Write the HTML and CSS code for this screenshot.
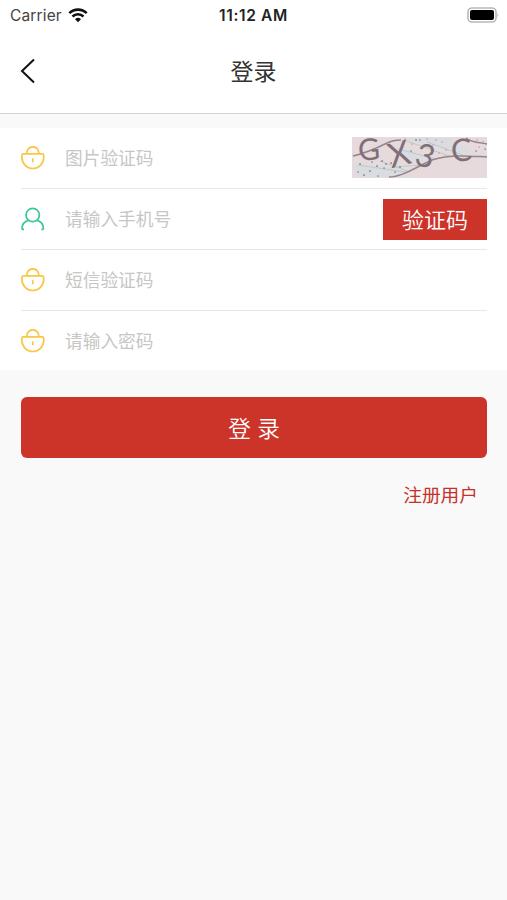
FILE: index.html
```
<!DOCTYPE html>
<html lang="zh-CN">

<head>
  <meta charset="UTF-8" />
  <meta name="viewport" content="width=device-width, initial-scale=1.0" />
  <title>登录</title>
  <link rel="stylesheet" href="styles.css">
</head>

<body>
  <div class="status">
    <div class="status-left">
      <span class="carrier">Carrier</span>
      <svg class="wifi" viewBox="0 0 20 15">
        <path d="M1.3 5.1a12.6 12.6 0 0 1 17.4 0" />
        <path d="M4.5 8.5a8 8 0 0 1 11 0" />
        <path class="wifi-dot" d="M7 11.2a4.3 4.3 0 0 1 6 0l-3 3z" />
      </svg>
    </div>
    <span class="time">11:12 AM</span>
    <div class="status-right">
      <svg class="battery" viewBox="0 0 33 16">
        <rect x="1" y="1" width="28" height="14" rx="4" fill="#fff" stroke="#b8b8b8" stroke-width="1.6" />
        <rect x="3" y="3" width="24" height="10" rx="2" />
        <path d="M30.5 5.8q1.8 2.2 0 4.4z" fill="#aaa" />
      </svg>
    </div>
  </div>
  <header class="header">
    <svg class="back" viewBox="0 0 16 26">
      <path d="M14 1.5L2 13l12 11.5" />
    </svg>
    <h1>登录</h1>
  </header>

  <form class="form">
    <div class="row">
      <svg class="icon lock" viewBox="0 0 24 24">
        <path d="M2.5 7.8h18.6q1.6 0 1.6 1.6v2.2a10.9 10.9 0 0 1-21.8 0V9.4q0-1.6 1.6-1.6zM5.8 7.6v-.8a6 6 0 0 1 12 0v.8M11.8 12.2v4" />
      </svg>
      <input type="text" placeholder="图片验证码">
      <svg class="captcha" viewBox="0 0 135 41">
        <rect width="135" height="41" fill="#e6dadd" />
        <path d="M0 27l34 3 28 10H6zM45 10l26 8 10 8-24-2zM50 1h48l26 16-30-4z" fill="#dadcdf" />
        <path d="M6 28l47 7M28 24l30 11M46 12l38 10M52 3l48 17M75 5l36 13M40 30l31-2" stroke="#b9cccd" fill="none" />
        <path d="M1 19c13-3 26-9 34-13 6-3 9-3 14-3M37 40c13 0 27-10 43-17 18-6 36-4 55-3M114 1c6 5 12 4 21 6" stroke="#93868d" stroke-width="1.5" fill="none" />
        <path d="M8 27h.1M18 34h.1M30 24h.1M39 26h.1M25 29h.1M12 38h.1M48 30h.1M34 27h.1M64 3h.1" class="dots blue" />
        <path d="M53 2h.1M60 7h.1M75 2h.1M81 8h.1M90 5h.1M87 16h.1M94 13h.1M127 10h.1M131 5h.1M125 3h.1M84 3h.1M93 19h.1" class="dots pink" />
        <path d="M6 35h.1M26 39h.1M43 35h.1M32 31h.1M59 14h.1M68 3h.1M124 14h.1M133 12h.1M20 25h.1" class="dots green" />
        <g class="captcha-text">
          <text x="6" y="23" font-size="30" transform="rotate(-4 17 13)">G</text>
          <text x="36" y="29" font-size="34" transform="rotate(-14 47 17)">X</text>
          <text x="64" y="30" font-size="32" transform="rotate(16 73 19)">3</text>
          <text x="99" y="24" font-size="31" transform="rotate(-4 110 13)">C</text>
        </g>
      </svg>
    </div>
    <div class="row">
      <svg class="icon user" viewBox="0 0 24 24">
        <circle cx="11.7" cy="8" r="6.7" />
        <path d="M1 22.3c-.3-4.6 2.6-7.9 6.8-9.2M15.6 13.1c4.2 1.3 7.1 4.6 6.8 9.2M.8 22.3h2.2M20.4 22.3h2.2" />
      </svg>
      <input type="text" placeholder="请输入手机号">
      <button class="code-btn" type="button">验证码</button>
    </div>
    <div class="row">
      <svg class="icon lock" viewBox="0 0 24 24">
        <path d="M2.5 7.8h18.6q1.6 0 1.6 1.6v2.2a10.9 10.9 0 0 1-21.8 0V9.4q0-1.6 1.6-1.6zM5.8 7.6v-.8a6 6 0 0 1 12 0v.8M11.8 12.2v4" />
      </svg>
      <input type="text" placeholder="短信验证码">
    </div>
    <div class="row">
      <svg class="icon lock" viewBox="0 0 24 24">
        <path d="M2.5 7.8h18.6q1.6 0 1.6 1.6v2.2a10.9 10.9 0 0 1-21.8 0V9.4q0-1.6 1.6-1.6zM5.8 7.6v-.8a6 6 0 0 1 12 0v.8M11.8 12.2v4" />
      </svg>
      <input type="password" placeholder="请输入密码">
    </div>
  </form>

  <div class="actions">
    <button class="login-btn" type="button">登 录</button>
    <a class="register">注册用户</a>
  </div>
</body>

</html>
```
FILE: styles.css
```
* {
  box-sizing: border-box;
}

body {
  margin: 0;
  min-height: 100vh;
  background: #f9f9f9;
  font-family: "Liberation Sans", "Noto Sans CJK SC", sans-serif;
  color: #333;
}

button,
input {
  font-family: inherit;
  border: none;
  padding: 0;
}

.status {
  display: grid;
  grid-template-columns: 1fr auto 1fr;
  align-items: center;
  height: 30px;
  padding: 0 7px;
  background: #fff;
  font-family: Inter, sans-serif;
}

.status-left {
  display: flex;
  align-items: center;
  gap: 6px;
  padding-left: 3px;
}

.carrier {
  font-size: 15.5px;
  letter-spacing: .15px;
  color: #444;
}

.wifi {
  width: 20px;
  height: 15px;
  fill: none;
  stroke: #111;
  stroke-width: 2.6;
}

.wifi .wifi-dot {
  fill: #111;
  stroke: none;
}

.time {
  font-size: 15.5px;
  font-weight: 600;
  letter-spacing: .65px;
  color: #222;
}

.status-right {
  display: flex;
  justify-content: flex-end;
  padding-bottom: 1px;
}

.battery {
  width: 33px;
  height: 16px;
}

.header {
  display: grid;
  grid-template-columns: 1fr auto 1fr;
  align-items: center;
  height: 84px;
  padding: 0 20px 2px;
  background: #fff;
  border-bottom: 1px solid #d4d4d4;
}

.back {
  width: 16px;
  height: 26px;
  fill: none;
  stroke: #111;
  stroke-width: 2;
}

.header h1 {
  margin: 0;
  padding-bottom: 2px;
  font-size: 23px;
  font-weight: 400;
}

.form {
  margin-top: 14px;
  padding: 0 20px 0 21px;
  background: #fff;
}

.row {
  display: flex;
  align-items: center;
  height: 61px;
  border-bottom: 1px solid #e8e8e8;
}

.row:last-child {
  height: 59px;
  border-bottom: none;
}

.icon {
  flex: none;
  width: 24px;
  height: 24px;
  margin-right: 20px;
  fill: none;
  stroke-width: 1.7;
}

.lock {
  stroke: #f9c646;
}

.user {
  stroke: #3cc796;
}

.row input {
  flex: 1;
  min-width: 0;
  height: 30px;
  padding-top: 3px;
  background: none;
  font-size: 17.7px;
  outline: none;
}

.row input::placeholder {
  color: #c6c6c6;
}

.captcha {
  flex: none;
  width: 135px;
  height: 41px;
  margin-bottom: 1px;
  overflow: visible;
}

.captcha-text {
  font-family: Lato, sans-serif;
  fill: #806f78;
}

.dots {
  fill: none;
  stroke-width: 1.7;
  stroke-linecap: round;
}

.blue {
  stroke: #756a91;
}

.pink {
  stroke: #d59bac;
}

.green {
  stroke: #639b98;
}

.code-btn {
  width: 104px;
  height: 41px;
  padding-bottom: 2px;
  background: #cc3329;
  color: #fff;
  font-size: 22px;
  font-weight: 350;
}

.actions {
  display: flex;
  flex-direction: column;
  padding: 27px 20px 0 21px;
}

.login-btn {
  height: 61px;
  border-radius: 6px;
  background: #cc3329;
  color: #fff;
  font-size: 22.7px;
  font-weight: 350;
}

.register {
  align-self: flex-end;
  margin: 22px 9px 0 0;
  font-size: 18.7px;
  color: #c5322e;
}
```
